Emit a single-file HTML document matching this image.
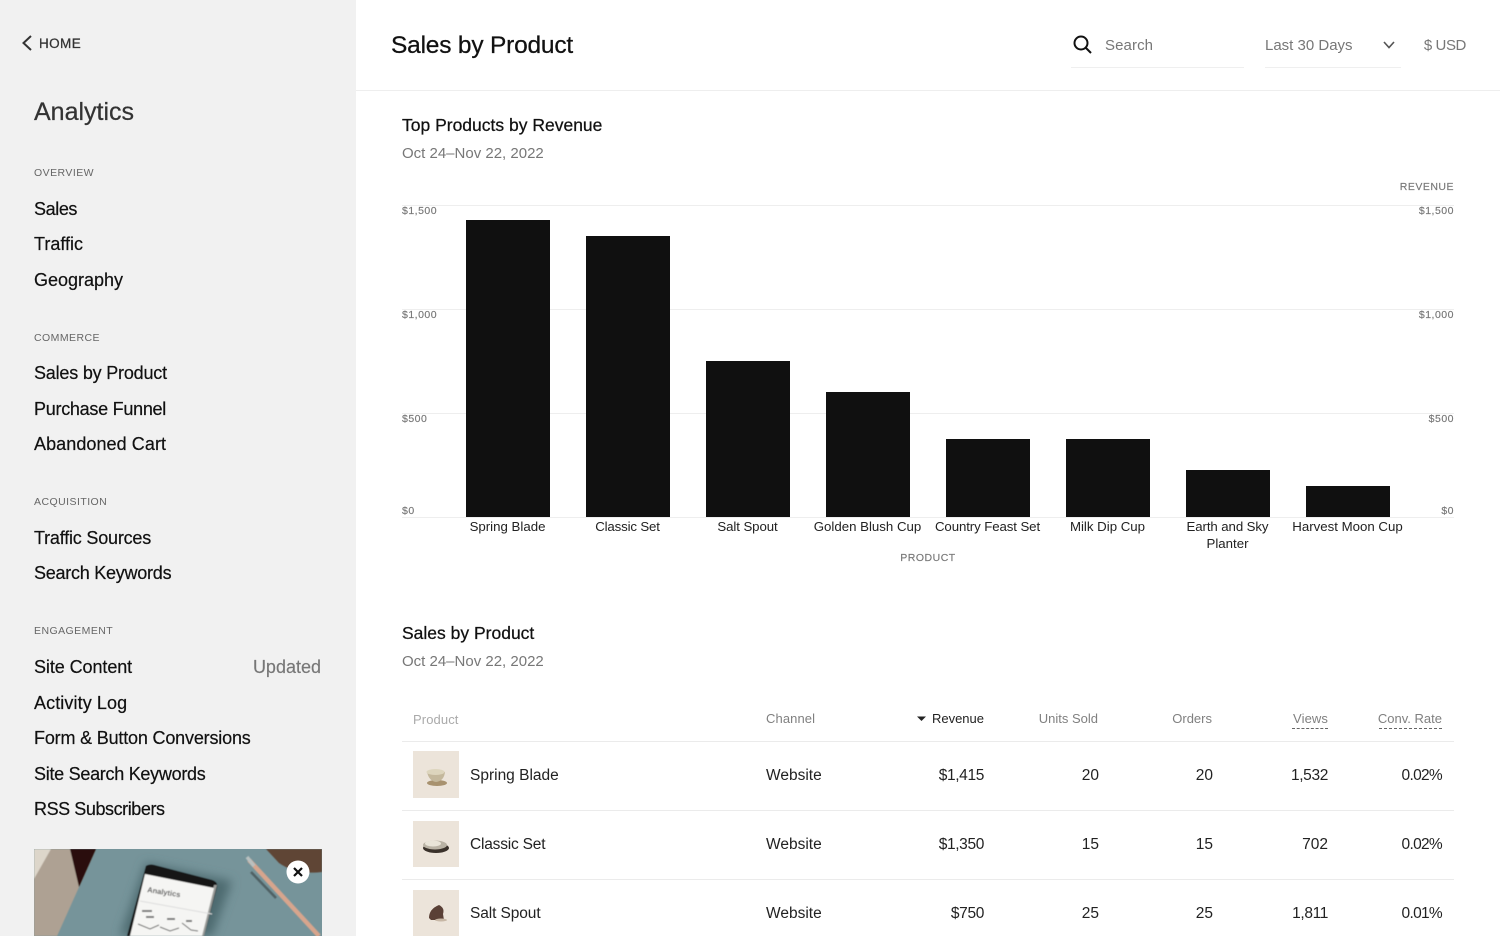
<!DOCTYPE html>
<html lang="en"><head><meta charset="utf-8"><title>Sales by Product</title>
<style>
html,body{margin:0;padding:0;width:1500px;height:936px;overflow:hidden;background:#fff}
body{position:relative;font-family:"Liberation Sans",sans-serif;color:#111;-webkit-font-smoothing:antialiased}
.t{position:absolute;white-space:nowrap;line-height:20px;height:20px}
.r{text-align:right;transform:translateX(-100%)}
.c{text-align:center;transform:translateX(-50%)}
.nav{font-size:18px;left:34px;color:#111;-webkit-text-stroke:.2px #111}
.sec{font-size:10.5px;left:34px;letter-spacing:.45px;color:#666}
.ax{font-size:10.5px;letter-spacing:.5px;color:#777;-webkit-text-stroke:.15px #777}
.lb{font-size:13.25px;color:#222}
.h{font-size:13px;color:#808080}
.d{font-size:15.5px;color:#222}
.n{letter-spacing:-.35px}
.b{position:absolute;background:#101010;width:83.5px}
.g{position:absolute;left:402px;width:1052px;height:1px;background:#eeeeee}
.l{position:absolute;left:402px;width:1052px;height:1px;background:#ebebeb}
</style></head><body>
<div style="position:absolute;left:0;top:0;width:356px;height:936px;background:#f1f1f1"></div>
<svg style="position:absolute;left:20px;top:34px" width="16" height="18" viewBox="0 0 16 18"><path d="M11 2 L3.500 9 L11 16" fill="none" stroke="#333" stroke-width="2"/></svg>
<div class="t" style="left:39px;top:34px;font-size:13.5px;letter-spacing:.4px;color:#333;-webkit-text-stroke:.25px #333">HOME</div>
<div class="t" style="left:34px;top:102px;font-size:25px;color:#333;-webkit-text-stroke:.25px #333">Analytics</div>

<div class="t sec" style="top:163px">OVERVIEW</div>
<div class="t nav" style="top:199px;letter-spacing:-.4px">Sales</div>
<div class="t nav" style="top:234px">Traffic</div>
<div class="t nav" style="top:270px">Geography</div>
<div class="t sec" style="top:328px">COMMERCE</div>
<div class="t nav" style="top:363px;letter-spacing:-.2px">Sales by Product</div>
<div class="t nav" style="top:399px;letter-spacing:-.27px">Purchase Funnel</div>
<div class="t nav" style="top:434px;letter-spacing:.07px">Abandoned Cart</div>
<div class="t sec" style="top:492px">ACQUISITION</div>
<div class="t nav" style="top:528px;letter-spacing:-.2px">Traffic Sources</div>
<div class="t nav" style="top:563px;letter-spacing:-.25px">Search Keywords</div>
<div class="t sec" style="top:621px">ENGAGEMENT</div>
<div class="t nav" style="top:657px;letter-spacing:-.08px">Site Content</div>
<div class="t r" style="left:321px;top:657px;font-size:18px;color:#777;-webkit-text-stroke:.15px #777">Updated</div>
<div class="t nav" style="top:693px;letter-spacing:.1px">Activity Log</div>
<div class="t nav" style="top:728px;letter-spacing:-.18px">Form &amp; Button Conversions</div>
<div class="t nav" style="top:764px;letter-spacing:-.28px">Site Search Keywords</div>
<div class="t nav" style="top:799px;letter-spacing:-.43px">RSS Subscribers</div>

<svg style="position:absolute;left:34px;top:849px" width="288" height="87" viewBox="0 0 288 87">
<defs><filter id="bl" x="-30%" y="-30%" width="160%" height="160%"><feGaussianBlur stdDeviation="5"/></filter><filter id="s"><feGaussianBlur stdDeviation=".6"/></filter></defs>
<rect width="288" height="87" fill="#76949a"/>
<g filter="url(#s)">
<path d="M0 0H62L23 87H0Z" fill="#a69a8c"/>
<path d="M17 0H36L45 38 23 87H0V30Z" fill="#aea193"/>
<path d="M0 0H17L0 30Z" fill="#ddd6ca"/>
<path d="M36 0H62L45 38Z" fill="#2a0f0b"/>
<path d="M232 0H288V23Q262 26 245 14Z" fill="#5f4436"/>
<path d="M112 14 198 32 178 87H86Z" fill="#4e6a70" filter="url(#bl)"/>
<path d="M112 17Q115 15 120 16L178 31Q184 33 183 38L170 87H93Z" fill="#171717"/>
<path d="M183 36 170 87H166L180 36Z" fill="#9a9c9a"/>
<path d="M111 25 180 39 168 87H96Z" fill="#f5f5f3"/>
<text x="113" y="43" font-size="7.500" font-weight="bold" fill="#555" transform="rotate(9 113 43)">Analytics</text>
<path d="M106 52 178 65" stroke="#ddd" stroke-width="1"/>
<path d="M104 75l12 5 9-4M126 78l10 4 9-3M148 74l9 7 7 1" fill="none" stroke="#666" stroke-width="1"/>
<path d="M108 62h10M112 68h8M133 70h8M152 72h6" stroke="#777" stroke-width="2"/>
<path d="M215 11 285 87" stroke="#d7a58d" stroke-width="4.500"/>
<path d="M213 8 220 17" stroke="#b9c0bf" stroke-width="3.500"/>
<path d="M217 23 242 49" stroke="#4f6064" stroke-width="2.500"/>
</g>
<circle cx="264" cy="23" r="11.500" fill="#fff"/>
<path d="M260 19 268 27M268 19 260 27" stroke="#111" stroke-width="2.200"/>
</svg>

<div style="position:absolute;left:356px;top:90px;width:1144px;height:1px;background:#eeeeee"></div>
<div class="t" style="left:391px;top:36px;font-size:24.5px;letter-spacing:-.2px;color:#111;-webkit-text-stroke:.25px #111">Sales by Product</div>
<svg style="position:absolute;left:1071px;top:33px" width="22" height="22" viewBox="0 0 22 22"><circle cx="10" cy="10" r="6.500" fill="none" stroke="#111" stroke-width="2"/><path d="M14.500 14.500 20 20" stroke="#111" stroke-width="2"/></svg>
<div class="t" style="left:1105px;top:35.500px;font-size:15px;letter-spacing:.1px;color:#777">Search</div>
<div style="position:absolute;left:1071px;top:67px;width:173px;height:1px;background:#efefef"></div>
<div class="t" style="left:1265px;top:35.500px;font-size:15px;color:#777">Last 30 Days</div>
<svg style="position:absolute;left:1382px;top:39px" width="14" height="12" viewBox="0 0 14 12"><path d="M2 3 7 8.500 12 3" fill="none" stroke="#555" stroke-width="1.600"/></svg>
<div style="position:absolute;left:1265px;top:67px;width:136px;height:1px;background:#efefef"></div>
<div class="t r" style="left:1466px;top:35.500px;font-size:15px;letter-spacing:-.4px;color:#777">$ USD</div>

<div class="t" style="left:402px;top:115px;font-size:17.5px;color:#111;-webkit-text-stroke:.25px #111">Top Products by Revenue</div>
<div class="t" style="left:402px;top:144px;font-size:15px;color:#777">Oct 24–Nov 22, 2022</div>

<div class="t ax r" style="left:1454px;top:177px">REVENUE</div>
<div class="g" style="top:205px"></div><div class="g" style="top:309px"></div><div class="g" style="top:413px"></div><div class="g" style="top:517px"></div>
<div class="t ax" style="left:402px;top:201px">$1,500</div><div class="t ax r" style="left:1454px;top:201px">$1,500</div>
<div class="t ax" style="left:402px;top:305px">$1,000</div><div class="t ax r" style="left:1454px;top:305px">$1,000</div>
<div class="t ax" style="left:402px;top:409px">$500</div><div class="t ax r" style="left:1454px;top:409px">$500</div>
<div class="t ax" style="left:402px;top:501px">$0</div><div class="t ax r" style="left:1454px;top:501px">$0</div>

<div class="b" style="left:466px;top:220px;height:297px"></div>
<div class="b" style="left:586px;top:236px;height:281px"></div>
<div class="b" style="left:706px;top:361px;height:156px"></div>
<div class="b" style="left:826px;top:392px;height:125px"></div>
<div class="b" style="left:946px;top:439px;height:78px"></div>
<div class="b" style="left:1066px;top:439px;height:78px"></div>
<div class="b" style="left:1186px;top:470px;height:47px"></div>
<div class="b" style="left:1306px;top:486px;height:31px"></div>

<div class="t lb c" style="left:507.500px;top:517px">Spring Blade</div>
<div class="t lb c" style="left:627.500px;top:517px;letter-spacing:-.15px">Classic Set</div>
<div class="t lb c" style="left:747.500px;top:517px;letter-spacing:-.1px">Salt Spout</div>
<div class="t lb c" style="left:867.500px;top:517px">Golden Blush Cup</div>
<div class="t lb c" style="left:987.500px;top:517px;letter-spacing:-.1px">Country Feast Set</div>
<div class="t lb c" style="left:1107.500px;top:517px">Milk Dip Cup</div>
<div class="t lb c" style="left:1227.500px;top:517px;letter-spacing:-.1px">Earth and Sky</div>
<div class="t lb c" style="left:1227.500px;top:534px">Planter</div>
<div class="t lb c" style="left:1347.500px;top:517px">Harvest Moon Cup</div>
<div class="t ax c" style="left:928px;top:548px">PRODUCT</div>

<div class="t" style="left:402px;top:623px;font-size:17.5px;color:#111;-webkit-text-stroke:.25px #111">Sales by Product</div>
<div class="t" style="left:402px;top:651.500px;font-size:15px;color:#777">Oct 24–Nov 22, 2022</div>

<div class="t" style="left:413px;top:710px;font-size:13px;letter-spacing:.1px;color:#aaa">Product</div>
<div class="t h" style="left:766px;top:709px;letter-spacing:.1px">Channel</div>
<svg style="position:absolute;left:917px;top:716px" width="10" height="6"><path d="M0 .5H9L4.500 5Z" fill="#222"/></svg>
<div class="t r" style="left:984px;top:709px;font-size:13px;color:#222">Revenue</div>
<div class="t h r" style="left:1098px;top:709px">Units Sold</div>
<div class="t h r" style="left:1212px;top:709px">Orders</div>
<div class="t h r" style="left:1328px;top:709px;letter-spacing:.1px">Views</div>
<div style="position:absolute;left:1292px;top:728px;width:36px;border-top:1px dashed #666"></div>
<div class="t h r" style="left:1442px;top:709px">Conv. Rate</div>
<div style="position:absolute;left:1379px;top:728px;width:63px;border-top:1px dashed #666"></div>

<div class="l" style="top:741px"></div><div class="l" style="top:810px"></div><div class="l" style="top:879px"></div>

<svg style="position:absolute;left:413px;top:751px" width="46" height="47"><rect width="46" height="47" fill="#ece4da"/><ellipse cx="24" cy="32" rx="10" ry="3" fill="#a8926f"/><path d="M14 21Q23 18 32 21Q31 30 23 31Q16 30 14 21Z" fill="#c4b89c"/><ellipse cx="22.500" cy="21" rx="9" ry="3" fill="#ddd5bd"/></svg>
<svg style="position:absolute;left:413px;top:821px" width="46" height="46"><rect width="46" height="46" fill="#ece4da"/><ellipse cx="23" cy="27" rx="13" ry="5" fill="#3a312a"/><ellipse cx="22" cy="24" rx="12" ry="4.500" fill="#b9b2a4"/><ellipse cx="20" cy="22.500" rx="8" ry="3" fill="#e9e4d8"/></svg>
<svg style="position:absolute;left:413px;top:890px" width="46" height="46"><rect width="46" height="46" fill="#ece4da"/><path d="M16 28Q16 19 26 15Q32 18 30 24L31 30H18Z" fill="#5a4036"/><ellipse cx="28" cy="30" rx="6" ry="1.500" fill="#c7b7a5"/></svg>

<div class="t d" style="left:470px;top:766px">Spring Blade</div>
<div class="t d" style="left:766px;top:766px">Website</div>
<div class="t d r n" style="left:984px;top:766px">$1,415</div>
<div class="t d r" style="left:1099px;top:766px">20</div>
<div class="t d r" style="left:1213px;top:766px">20</div>
<div class="t d r n" style="left:1328px;top:766px">1,532</div>
<div class="t d r" style="left:1442px;top:766px;letter-spacing:-.7px">0.02%</div>

<div class="t d" style="left:470px;top:835px;letter-spacing:-.2px">Classic Set</div>
<div class="t d" style="left:766px;top:835px">Website</div>
<div class="t d r n" style="left:984px;top:835px">$1,350</div>
<div class="t d r" style="left:1099px;top:835px">15</div>
<div class="t d r" style="left:1213px;top:835px">15</div>
<div class="t d r" style="left:1328px;top:835px">702</div>
<div class="t d r" style="left:1442px;top:835px;letter-spacing:-.7px">0.02%</div>

<div class="t d" style="left:470px;top:904px;letter-spacing:-.1px">Salt Spout</div>
<div class="t d" style="left:766px;top:904px">Website</div>
<div class="t d r n" style="left:984px;top:904px">$750</div>
<div class="t d r" style="left:1099px;top:904px">25</div>
<div class="t d r" style="left:1213px;top:904px">25</div>
<div class="t d r n" style="left:1328px;top:904px">1,811</div>
<div class="t d r" style="left:1442px;top:904px;letter-spacing:-.7px">0.01%</div>
</body></html>
